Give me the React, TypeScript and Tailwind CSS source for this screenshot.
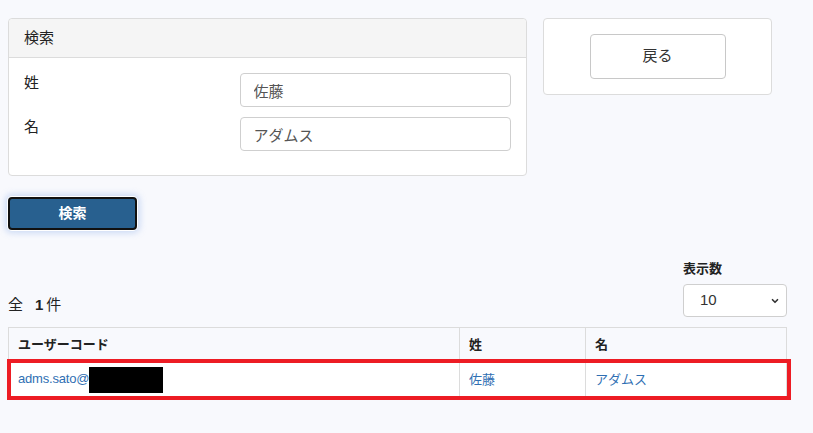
import { ChevronDown } from 'lucide-react';

const font = { fontFamily: '"Liberation Sans", "Noto Sans CJK JP", sans-serif' };

const Field = ({ label, value }: { label: string; value: string }) => (
  <div className="flex items-start">
    <div className="w-[216px] text-[15px] leading-[20px] text-[#222]">{label}</div>
    <input
      readOnly
      value={value}
      className="h-[34px] w-[272px] rounded-[4px] border border-[#cfcfcf] bg-white px-[13px] text-[15px] text-[#555] outline-none"
    />
  </div>
);

export default function App() {
  return (
    <div className="min-h-screen bg-[#f8f9fd] pl-[8px] pr-[26px] pt-[18px] text-[#222]" style={font}>
      <div className="flex items-start gap-[16px]">
        <div className="w-[519px] rounded-[4px] border border-[#dcdcdc] bg-white">
          <div className="flex h-[39px] items-center rounded-t-[4px] border-b border-[#dcdcdc] bg-[#f5f5f5] px-[15px] text-[15px]">
            検索
          </div>
          <div className="flex flex-col gap-[10px] pb-[24px] pl-[15px] pr-[15px] pt-[15px]">
            <Field label="姓" value="佐藤" />
            <Field label="名" value="アダムス" />
          </div>
        </div>
        <div className="flex w-[229px] justify-center rounded-[4px] border border-[#dcdcdc] bg-white py-[15px]">
          <button className="h-[45px] w-[136px] rounded-[4px] border border-[#c8c8c8] bg-white text-[15px] text-[#333]">
            戻る
          </button>
        </div>
      </div>

      <button className="mt-[21px] h-[33px] w-[129px] rounded-[4px] border-2 border-[#111] bg-[#28608f] text-[14px] font-bold text-white shadow-[0_0_0_1px_#fff,0_0_6px_3px_rgba(120,160,230,0.35)]">
        検索
      </button>

      <div className="mt-[30px] flex items-end justify-between">
        <div className="mb-[2px] text-[15px] leading-[20px]">
          全<span className="ml-[12px] font-bold">1</span>
          <span className="ml-[3px]">件</span>
        </div>
        <div className="flex w-[104px] flex-col">
          <div className="mb-[6px] text-[13px] font-bold leading-[18px]">表示数</div>
          <div className="relative h-[33px] rounded-[4px] border border-[#cfcfcf] bg-white">
            <div className="flex h-full items-center pl-[16px] text-[15px] text-[#333]">10</div>
            <ChevronDown className="absolute right-[6px] top-[11px] h-[10px] w-[10px] text-[#333]" strokeWidth={4} />
          </div>
        </div>
      </div>

      <div className="relative mt-[10px]">
        <table className="w-full border-collapse text-[13px]">
          <thead>
            <tr className="h-[34px]">
              <th className="w-[451px] border border-[#dcdcdc] px-[9px] text-left font-bold">ユーザーコード</th>
              <th className="w-[126px] border border-[#dcdcdc] px-[9px] text-left font-bold">姓</th>
              <th className="border border-[#dcdcdc] px-[9px] text-left font-bold">名</th>
            </tr>
          </thead>
          <tbody>
            <tr className="h-[36px] bg-white text-[#2f6fb3]">
              <td className="border border-[#dcdcdc] pl-[9px] pr-[9px]">
                <span className="tracking-[-0.2px]">adms.sato@</span>
                <span className="inline-block h-[26px] w-[74px] bg-black align-middle" />
              </td>
              <td className="border border-[#dcdcdc] px-[9px]">佐藤</td>
              <td className="border border-[#dcdcdc] px-[9px]">アダムス</td>
            </tr>
          </tbody>
        </table>
        <div className="pointer-events-none absolute left-[-1px] top-[32px] h-[41px] w-[784px] border-[4px] border-[#ed1c24]" />
      </div>
    </div>
  );
}
